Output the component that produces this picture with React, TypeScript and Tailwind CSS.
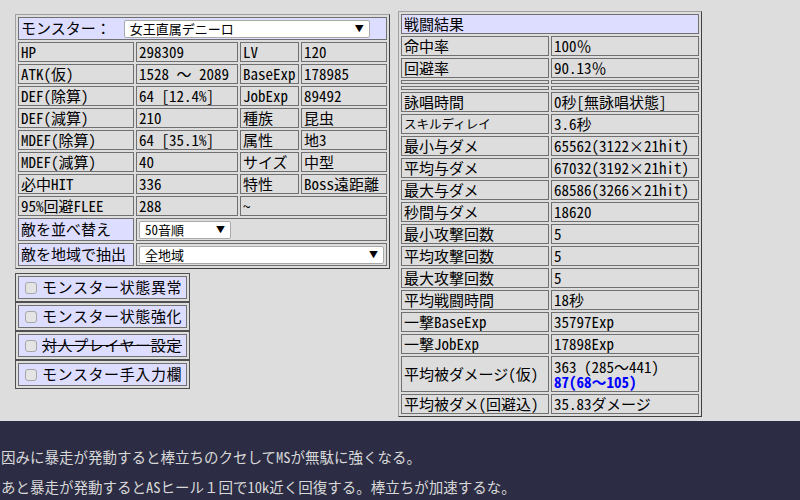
import React from 'react';

const FONT = "font-['Noto_Sans_CJK_JP',sans-serif] [font-feature-settings:'hwid']";

type CellProps = {
  children?: React.ReactNode;
  className?: string;
};

// full-width glyph box so ％ ： ～ keep their 1em advance under hwid
function Fw({ children, className = '' }: { children: React.ReactNode; className?: string }) {
  return (
    <span className={`inline-block w-[1em] text-center [font-feature-settings:normal] ${className}`}>
      {children}
    </span>
  );
}

function Cell({ children, className = '' }: CellProps) {
  return (
    <div
      className={`border border-[#707070] h-[20px] flex items-center pl-[2px] whitespace-nowrap overflow-hidden ${className}`}
    >
      {children}
    </div>
  );
}

function FakeSelect({ value, className = '' }: { value: string; className?: string }) {
  return (
    <div
      className={`h-[18px] bg-white border border-[#a9a9a9] rounded-[2px] flex items-center justify-between pl-[5px] pr-[5px] text-[13px] ${className}`}
    >
      <span>{value}</span>
      <span className="text-[9px] leading-none">▼</span>
    </div>
  );
}

const monsterRows: [string, React.ReactNode, string, string][] = [
  ['HP', '298309', 'LV', '120'],
  [
    'ATK(仮)',
    <>
      1528<Fw className="mx-[0.5em]">～</Fw>2089
    </>,
    'BaseExp',
    '178985',
  ],
  ['DEF(除算)', '64 [12.4%]', 'JobExp', '89492'],
  ['DEF(減算)', '210', '種族', '昆虫'],
  ['MDEF(除算)', '64 [35.1%]', '属性', '地3'],
  ['MDEF(減算)', '40', 'サイズ', '中型'],
  ['必中HIT', '336', '特性', 'Boss遠距離'],
];

const battleTop: [string, React.ReactNode][] = [
  ['命中率', <>100<Fw>％</Fw></>],
  ['回避率', <>90.13<Fw>％</Fw></>],
];

const battleRows: [string, string][] = [
  ['詠唱時間', '0秒[無詠唱状態]'],
  ['スキルディレイ', '3.6秒'],
  ['最小与ダメ', '65562(3122×21hit)'],
  ['平均与ダメ', '67032(3192×21hit)'],
  ['最大与ダメ', '68586(3266×21hit)'],
  ['秒間与ダメ', '18620'],
  ['最小攻撃回数', '5'],
  ['平均攻撃回数', '5'],
  ['最大攻撃回数', '5'],
  ['平均戦闘時間', '18秒'],
  ['一撃BaseExp', '35797Exp'],
  ['一撃JobExp', '17898Exp'],
];

const options = [
  { label: 'モンスター状態異常', strike: false },
  { label: 'モンスター状態強化', strike: false },
  { label: '対人プレイヤー設定', strike: true },
  { label: 'モンスター手入力欄', strike: false },
];

export default function App() {
  return (
    <div className={`w-[800px] h-[500px] overflow-hidden text-black text-[15px] ${FONT}`}>
      <div className="h-[421px] bg-[#dddddd] flex items-start pl-[15px] pt-[11px] gap-[8px]">
        {/* Left column */}
        <div className="mt-[3px] flex flex-col">
          <div className="w-[375px] border border-t-[#a0a0a0] border-l-[#a0a0a0] border-r-[#404040] border-b-[#404040] p-[2px]">
            <div className="grid grid-cols-[116px_102px_59px_86px] gap-[2px]">
              <div className="col-span-4 h-[23px] border border-[#707070] bg-[#ddddff] flex items-center pl-[2px]">
                <span>
                  モンスター<Fw>：</Fw>
                </span>
                <FakeSelect value="女王直属デニーロ" className="ml-[13px] w-[246px]" />
              </div>

              {monsterRows.map((row) => (
                <React.Fragment key={row[0]}>
                  <Cell>{row[0]}</Cell>
                  <Cell>{row[1]}</Cell>
                  <Cell>{row[2]}</Cell>
                  <Cell>{row[3]}</Cell>
                </React.Fragment>
              ))}

              <Cell>95%回避FLEE</Cell>
              <Cell>288</Cell>
              <Cell className="col-span-2">~</Cell>

              <Cell className="h-[23px] bg-[#ddddff]">敵を並べ替え</Cell>
              <Cell className="h-[23px] col-span-3">
                <FakeSelect value="50音順" className="w-[92px]" />
              </Cell>

              <Cell className="h-[23px] bg-[#ddddff]">敵を地域で抽出</Cell>
              <Cell className="h-[23px] col-span-3">
                <FakeSelect value="全地域" className="w-[245px]" />
              </Cell>
            </div>
          </div>

          {/* Option toggles */}
          <div className="mt-[4px] flex flex-col">
            {options.map((opt) => (
              <div key={opt.label} className="w-[175px] border border-[#505050] p-[2px]">
                <div className="h-[23px] border border-[#707070] bg-[#ddddff] flex items-center">
                  <span className="ml-[6px] w-[12px] h-[12px] rounded-[3px] border border-[#a6a6a6] bg-[#e4e4e4]" />
                  <span className={`ml-[5px] tracking-[0.6px] whitespace-nowrap ${opt.strike ? 'line-through' : ''}`}>
                    {opt.label}
                  </span>
                </div>
              </div>
            ))}
          </div>
        </div>

        {/* Battle result */}
        <div className="w-[304px] border border-t-[#a0a0a0] border-l-[#a0a0a0] border-r-[#404040] border-b-[#404040] p-[2px]">
          <div className="grid grid-cols-[148px_148px] gap-[2px]">
            <Cell className="col-span-2 bg-[#ddddff]">戦闘結果</Cell>
            {battleTop.map(([k, v]) => (
              <React.Fragment key={k}>
                <Cell>{k}</Cell>
                <Cell>{v}</Cell>
              </React.Fragment>
            ))}
            <div className="h-[4px] border border-[#707070]" />
            <div className="h-[4px] border border-[#707070]" />
            <div className="h-[4px] border border-[#707070]" />
            <div className="h-[4px] border border-[#707070]" />
            {battleRows.map(([k, v]) => (
              <React.Fragment key={k}>
                <Cell>{k === 'スキルディレイ' ? <span className="text-[12.5px]">{k}</span> : k}</Cell>
                <Cell>{v}</Cell>
              </React.Fragment>
            ))}
            <Cell className="h-[36px]">平均被ダメージ(仮)</Cell>
            <div className="h-[36px] border border-[#707070] flex flex-col justify-center pl-[2px] leading-[15px] whitespace-nowrap">
              <span>
                363 (285<Fw>～</Fw>441)
              </span>
              <span className="font-bold text-[#0000ff]">
                87(68<Fw>～</Fw>105)
              </span>
            </div>
            <Cell>平均被ダメ(回避込)</Cell>
            <Cell>35.83ダメージ</Cell>
          </div>
        </div>
      </div>

      {/* Comment area */}
      <div className="h-[79px] bg-[#2c2d44] text-[#d8d8d8] text-[14.5px] leading-[30px] pt-[21px] pl-[1px]">
        <p>因みに暴走が発動すると棒立ちのクセしてMSが無駄に強くなる。</p>
        <p>
          あと暴走が発動するとASヒール<Fw>１</Fw>回で10k近く回復する。棒立ちが加速するな。
        </p>
      </div>
    </div>
  );
}
